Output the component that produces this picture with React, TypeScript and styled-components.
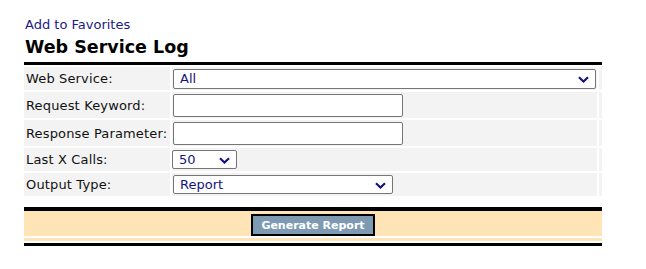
import React from 'react'
import styled, {createGlobalStyle} from 'styled-components'

const GlobalStyle = createGlobalStyle`
    body {
        margin: 0;
        background: #fff;
        font-family: "DejaVu Sans", Verdana, sans-serif;
        font-size: 13px;
        color: #111;
    }
`

// ページ全体
const Page = styled.div`
    padding: 17px 0 0 24px;
    width: 578px;
`

const FavLink = styled.a`
    display: block;
    color: #1c1a8a;
    text-decoration: none;
    font-size: 13px;
    line-height: 16px;
    padding-left: 1px;
`

const Title = styled.h1`
    margin: 3px 0 0;
    font-size: 17.5px;
    line-height: 23px;
    font-weight: bold;
    color: #000;
    padding-left: 1px;
    padding-bottom: 3px;
`

// フォームの表
const FormGrid = styled.div`
    display: grid;
    grid-template-columns: 146px 425px 3px;
    grid-template-rows: 23px 26px 26px 23px 23px;
    gap: 2px;
    border-top: 3px solid #000;
    padding-top: 2px;
`

const Cell = styled.div`
    background: #f3f3f3;
    display: flex;
    align-items: center;
`

const LabelCell = styled(Cell)`
    padding-left: 2px;
    color: #111;
    white-space: nowrap;
    letter-spacing: 0.15px;
`

const FieldCell = styled(Cell)`
    padding-left: ${p => (p.$tight ? 0 : 1)}px;
`

const SelectWrap = styled.div`
    position: relative;
    display: inline-block;
    width: ${p => p.$w}px;
    height: ${p => p.$h ?? 20}px;
`

const Select = styled.select`
    appearance: none;
    -webkit-appearance: none;
    width: 100%;
    height: 100%;
    box-sizing: border-box;
    border: 1px solid #767676;
    border-radius: 2px;
    background: #fff;
    color: #14127e;
    font-family: "DejaVu Sans", Verdana, sans-serif;
    font-size: 13px;
    padding: 0 0 0 6px;
    margin: 0;
`

const Chevron = styled.svg`
    position: absolute;
    right: 7px;
    top: 50%;
    margin-top: -3px;
    width: 11px;
    height: 7px;
    pointer-events: none;
`

const TextInput = styled.input`
    width: 230px;
    height: 23px;
    box-sizing: border-box;
    border: 1px solid #767676;
    border-radius: 2px;
    background: #fff;
    margin: 0;
    padding: 0 4px;
    font-family: "DejaVu Sans", Verdana, sans-serif;
    font-size: 13px;
`

// 下のボタン部分
const Footer = styled.div`
    margin-top: 11px;
    border-top: 4px solid #000;
    border-bottom: 3px solid #000;
    padding-bottom: 2px;
    display: flex;
    flex-direction: column;
    gap: 2px;
`

const ButtonBar = styled.div`
    background: #ffe4b5;
    height: 25px;
    box-sizing: border-box;
    padding-top: 3px;
    display: flex;
    justify-content: center;
    align-items: flex-start;
`

const Strip = styled.div`
    background: #ffe4b5;
    height: 3px;
`

const GenerateButton = styled.button`
    width: 124px;
    height: 22px;
    box-sizing: border-box;
    border: 2px solid #000;
    background: #7d9ab2;
    color: #fff;
    font-family: "DejaVu Sans", Verdana, sans-serif;
    font-size: 11px;
    font-weight: bold;
    padding: 0;
    margin: 0;
`

const Drop: React.FC<{w: number; h?: number; value: string}> = ({w, h, value}) => (
    <SelectWrap $w={w} $h={h}>
        <Select defaultValue={value}>
            <option>{value}</option>
        </Select>
        <Chevron viewBox="0 0 11 7">
            <path d="M1 1.2 L5.5 5.5 L10 1.2" fill="none" stroke="#14127e" strokeWidth="2.2" />
        </Chevron>
    </SelectWrap>
)

const rows: {label: string; field: React.ReactNode; tight?: boolean}[] = [
    {label: 'Web Service:', field: <Drop w={423} value="All" />},
    {label: 'Request Keyword:', field: <TextInput type="text" />},
    {label: 'Response Parameter:', field: <TextInput type="text" />},
    {label: 'Last X Calls:', field: <Drop w={65} h={19} value="50" />, tight: true},
    {label: 'Output Type:', field: <Drop w={220} h={19} value="Report" />},
]

export default function App() {
    return (
        <Page>
            <GlobalStyle />
            <FavLink href="#">Add to Favorites</FavLink>
            <Title>Web Service Log</Title>
            <FormGrid>
                {rows.map(r => (
                    <React.Fragment key={r.label}>
                        <LabelCell>{r.label}</LabelCell>
                        <FieldCell $tight={r.tight}>{r.field}</FieldCell>
                        <Cell />
                    </React.Fragment>
                ))}
            </FormGrid>
            <Footer>
                <ButtonBar>
                    <GenerateButton>Generate Report</GenerateButton>
                </ButtonBar>
                <Strip />
            </Footer>
        </Page>
    )
}
